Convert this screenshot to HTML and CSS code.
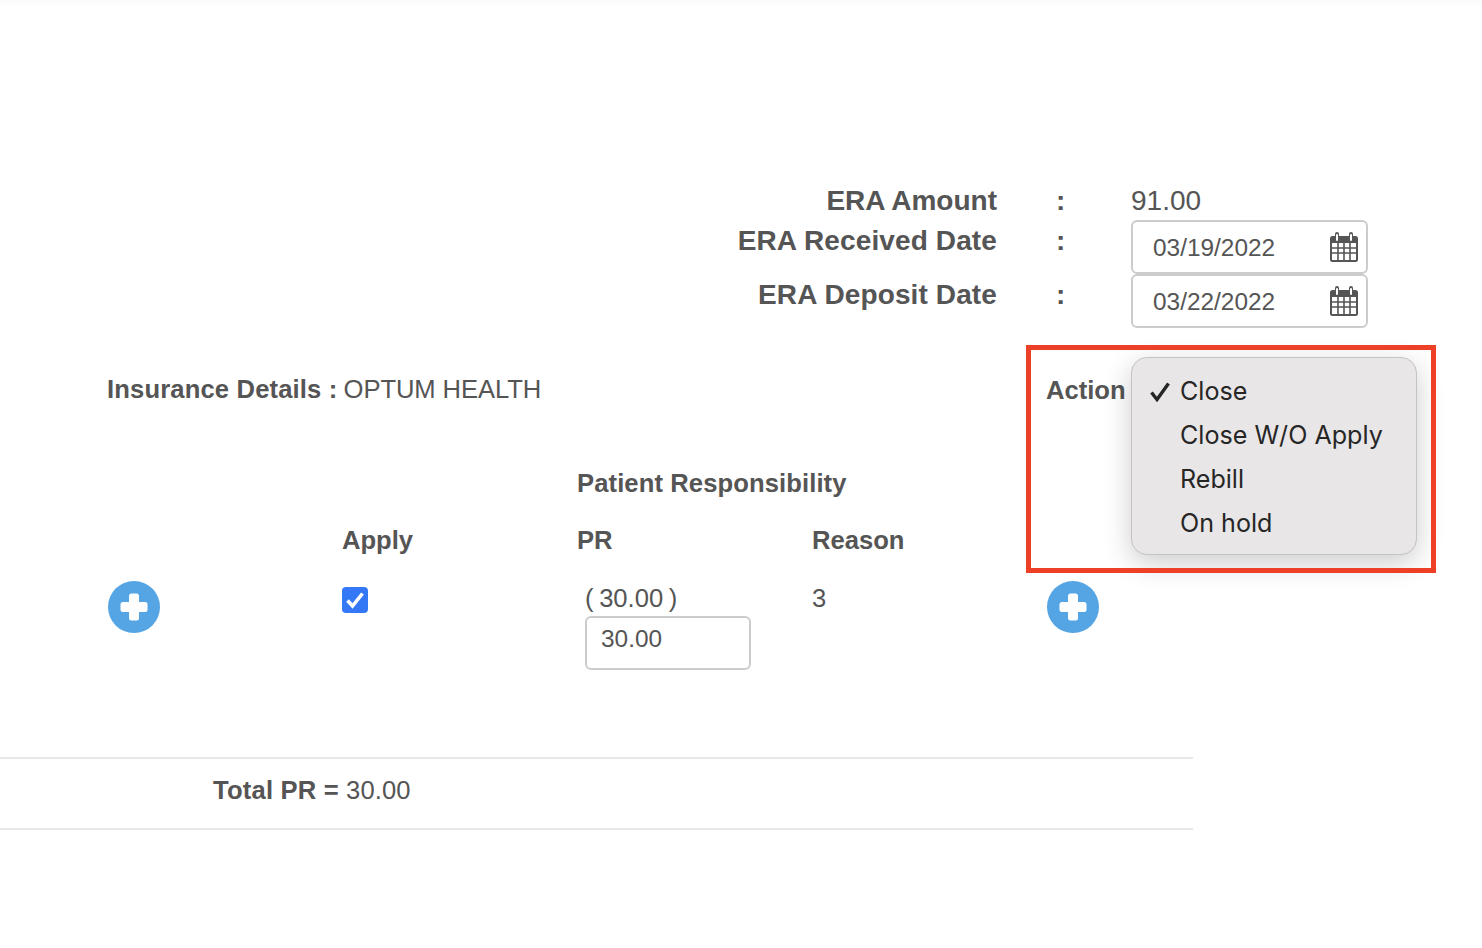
FILE: index.html
```html
<!DOCTYPE html>
<html lang="en">
<head>
<meta charset="utf-8">
<title>ERA details</title>
<link rel="stylesheet" href="styles.css">
</head>
<body>
<main class="page">
  <section class="summary">
    <div class="sum-row row-amount">
      <span class="sum-label">ERA Amount</span><span class="sum-colon">:</span><span class="sum-value">91.00</span>
    </div>
    <div class="sum-row row-date">
      <span class="sum-label wide">ERA Received Date</span><span class="sum-colon">:</span>
      <div class="date-field"><span>03/19/2022</span>
        <svg class="cal" viewBox="0 0 28 30"><path fill="#555" fill-rule="evenodd" d="M7 0a2 2 0 0 1 2 2v2h10V2a2 2 0 0 1 4 0v2h2.500A2.500 2.500 0 0 1 28 6.500v21a2.500 2.500 0 0 1-2.500 2.500h-23A2.500 2.500 0 0 1 0 27.500v-21A2.500 2.500 0 0 1 2.500 4H5V2a2 2 0 0 1 2-2zM6 3v5a1 1 0 0 0 2 0V3a1 1 0 0 0-2 0zm14 0v5a1 1 0 0 0 2 0V3a1 1 0 0 0-2 0zM2 11v17h24V11z"/><path stroke="#555" stroke-width="1.600" fill="none" d="M2 16h24M2 21h24M8 11v17M14 11v17M20 11v17"/></svg>
      </div>
    </div>
    <div class="sum-row row-date">
      <span class="sum-label wide">ERA Deposit Date</span><span class="sum-colon">:</span>
      <div class="date-field"><span>03/22/2022</span>
        <svg class="cal" viewBox="0 0 28 30"><path fill="#555" fill-rule="evenodd" d="M7 0a2 2 0 0 1 2 2v2h10V2a2 2 0 0 1 4 0v2h2.500A2.500 2.500 0 0 1 28 6.500v21a2.500 2.500 0 0 1-2.500 2.500h-23A2.500 2.500 0 0 1 0 27.500v-21A2.500 2.500 0 0 1 2.500 4H5V2a2 2 0 0 1 2-2zM6 3v5a1 1 0 0 0 2 0V3a1 1 0 0 0-2 0zm14 0v5a1 1 0 0 0 2 0V3a1 1 0 0 0-2 0zM2 11v17h24V11z"/><path stroke="#555" stroke-width="1.600" fill="none" d="M2 16h24M2 21h24M8 11v17M14 11v17M20 11v17"/></svg>
      </div>
    </div>
  </section>

  <section class="insurance">
    <p class="ins-text"><b>Insurance Details :</b> <span class="ins-name">OPTUM HEALTH</span></p>
    <span class="action-label">Action</span>
  </section>

  <section class="table">
    <div class="group-head">Patient Responsibility</div>
    <div class="head-row">
      <span></span><span>Apply</span><span>PR</span><span>Reason</span><span></span>
    </div>
    <div class="data-row">
      <div><svg class="plus" viewBox="0 0 52 52"><circle cx="26" cy="26" r="26" fill="#55a5e4"/><rect x="21" y="12.500" width="10" height="27" rx="2.500" fill="#fff"/><rect x="12.500" y="21" width="27" height="10" rx="2.500" fill="#fff"/></svg></div>
      <div><span class="check"><svg viewBox="0 0 26 26"><path d="M5.500 13.500l5 5.500 10-12.500" fill="none" stroke="#fff" stroke-width="3.600"/></svg></span></div>
      <div class="pr-cell"><div class="pr-value">( 30.00 )</div><div class="pr-input">30.00</div></div>
      <div class="reason">3</div>
      <div><svg class="plus plus-end" viewBox="0 0 52 52"><circle cx="26" cy="26" r="26" fill="#55a5e4"/><rect x="21" y="12.500" width="10" height="27" rx="2.500" fill="#fff"/><rect x="12.500" y="21" width="27" height="10" rx="2.500" fill="#fff"/></svg></div>
    </div>
  </section>

  <section class="total"><b>Total PR =</b> <span class="total-value">30.00</span></section>

  <ul class="menu">
    <li class="selected"><svg class="tick" viewBox="0 0 20 20"><path d="M1.500 10.500l5.500 7L18.500 1.500" fill="none" stroke="#262626" stroke-width="3.400"/></svg>Close</li>
    <li>Close W/O Apply</li>
    <li>Rebill</li>
    <li>On hold</li>
  </ul>
  <div class="highlight"></div>
</main>
</body>
</html>
```

FILE: styles.css
```css
* { box-sizing: border-box; }
html, body { margin: 0; padding: 0; background: #fff; }
body {
  font-family: "Liberation Sans", Arial, sans-serif;
  color: #555;
  height: 948px;
  overflow: hidden;
}
b { font-weight: 700; }
.page {
  position: relative;
  height: 948px;
  background: linear-gradient(#fafafa, #fff 8px);
  padding-top: 180px;
}
.summary { display: flex; flex-direction: column; }
.sum-row {
  display: grid;
  grid-template-columns: 997px 134px 1fr;
  font-size: 28px;
  line-height: 41px;
}
.row-amount { height: 40px; }
.row-date { height: 54px; }
.sum-label { text-align: right; font-weight: 700; }
.sum-label.wide { letter-spacing: .12px; }
.sum-colon { font-weight: 700; padding-left: 59px; }
.date-field {
  width: 237px;
  height: 54px;
  border: 2px solid #ccc;
  border-radius: 6px;
  padding: 0 8px 0 20px;
  display: flex;
  align-items: center;
  justify-content: space-between;
  font-size: 24.400px;
}
.cal { width: 28px; height: 30px; }
.insurance {
  margin-top: 34px;
  height: 54px;
  padding-left: 107px;
  display: flex;
  font-size: 25.600px;
  line-height: 54px;
}
.ins-text { margin: 0; width: 939px; }
.ins-text b { letter-spacing: .15px; }
.ins-name { margin-left: -1px; letter-spacing: -.08px; }
.action-label { font-weight: 700; line-height: 56px; }
.table { margin-top: 47px; padding-left: 107px; font-size: 25.600px; }
.group-head { padding-left: 470px; font-weight: 700; letter-spacing: .1px; line-height: 40px; height: 57px; }
.head-row {
  display: grid;
  grid-template-columns: repeat(5, 235px);
  font-weight: 700;
  line-height: 40px;
  height: 61px;
}
.data-row {
  display: grid;
  grid-template-columns: repeat(5, 235px);
  height: 176px;
}
.plus { display: block; width: 52px; height: 52px; margin-left: 1px; }
.plus-end { margin-left: 0; }
.check {
  display: block;
  width: 26px;
  height: 26px;
  margin-top: 6px;
  background: #3478f6;
  border-radius: 4px;
}
.check svg { display: block; width: 26px; height: 26px; }
.pr-cell { padding-left: 8px; margin-top: -1px; }
.pr-value { line-height: 36px; word-spacing: -1.500px; }
.pr-input {
  width: 166px;
  height: 54px;
  border: 2px solid #ccc;
  border-radius: 6px;
  padding-left: 14px;
  line-height: 42px;
  font-size: 24.400px;
}
.reason { line-height: 36px; margin-top: -1px; }
.total {
  width: 1193px;
  height: 73px;
  border-top: 2px solid #e8e8e8;
  border-bottom: 2px solid #e8e8e8;
  padding-left: 213px;
  font-size: 25.600px;
  line-height: 62px;
}
.total b { letter-spacing: .2px; }
.total-value { letter-spacing: .1px; }
.highlight {
  position: absolute;
  left: 1026px;
  top: 345px;
  width: 410px;
  height: 228px;
  border: 5px solid #ee4027;
}
.menu {
  position: absolute;
  left: 1131px;
  top: 357px;
  width: 286px;
  height: 198px;
  margin: 0;
  padding: 11px 0 0 48px;
  list-style: none;
  background: #e9e6e7;
  border: 1px solid #c4c2c2;
  border-radius: 16px;
  box-shadow: 0 8px 28px rgba(0, 0, 0, .2);
  font-family: Inter, "Liberation Sans", sans-serif;
  font-size: 25.100px;
  line-height: 44px;
  color: #262626;
}
.menu li { position: relative; }
.tick { position: absolute; left: -30px; top: 13px; width: 20px; height: 20px; }
```
